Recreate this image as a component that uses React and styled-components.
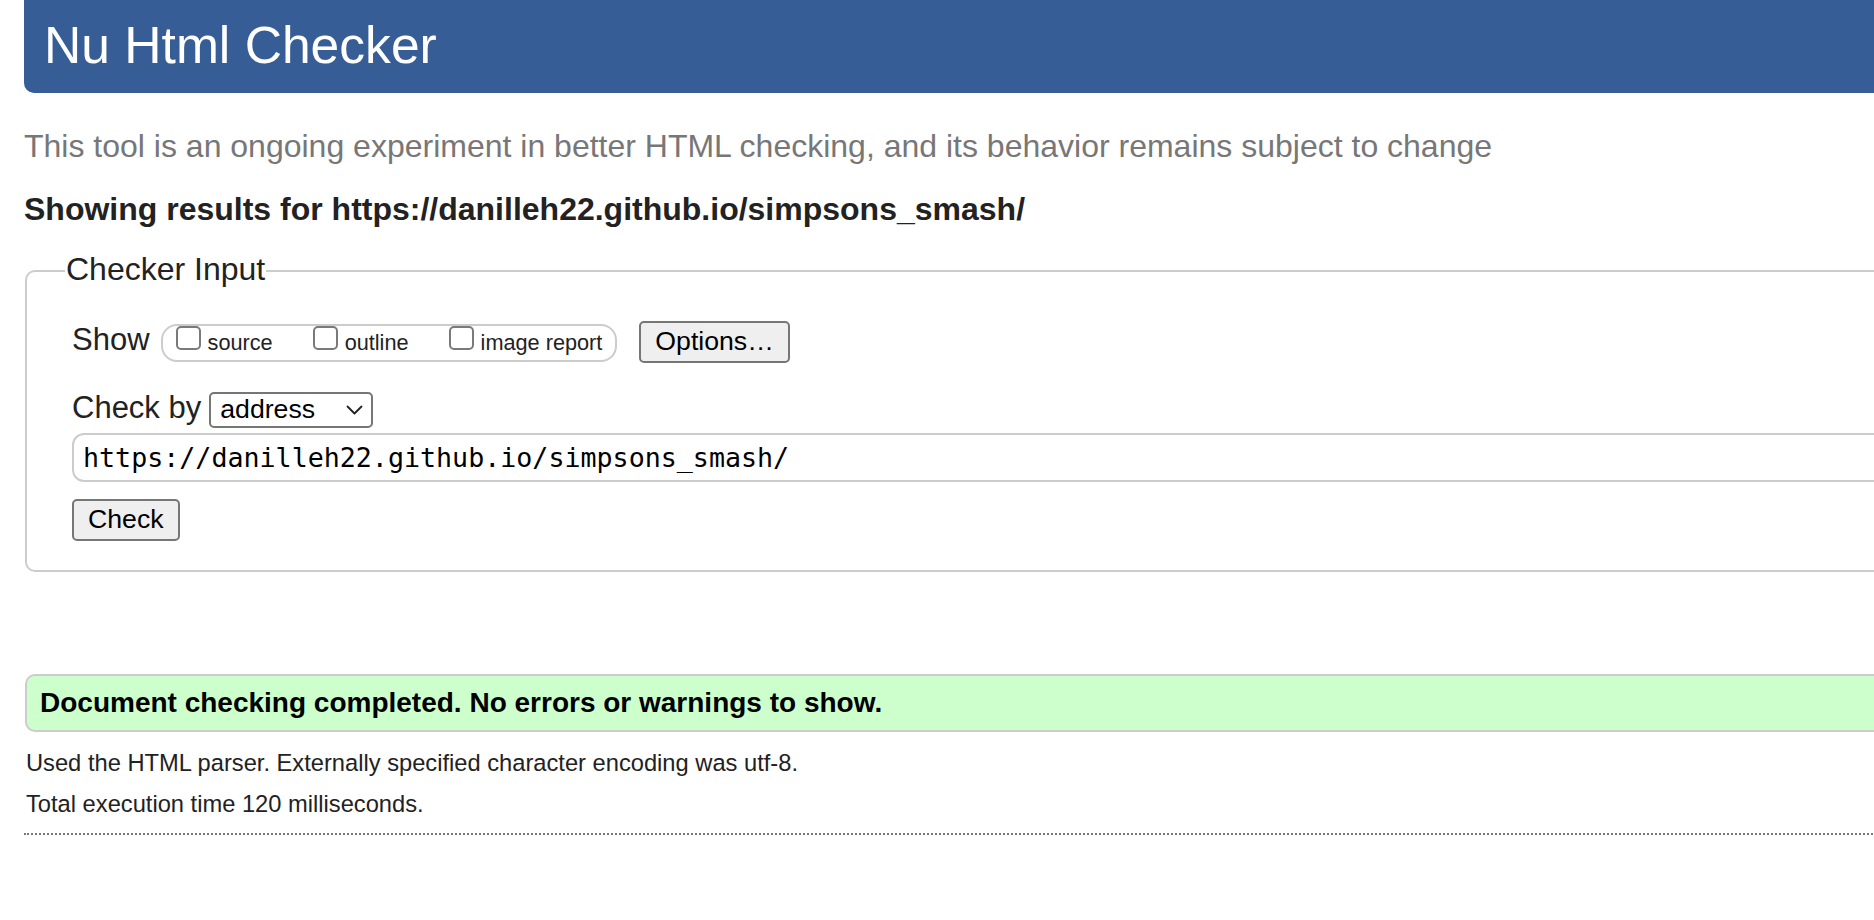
import React from "react";
import styled, { createGlobalStyle } from "styled-components";

const GlobalStyle = createGlobalStyle`
  html, body {
    margin: 0;
    padding: 0;
    overflow: hidden;
    background: #fff;
  }
  body {
    font-family: "Liberation Sans", Arial, Helvetica, sans-serif;
    color: #222;
  }
`;

const App = () => {
  return (
    <Page>
      <GlobalStyle />
      <Header>
        <Title>Nu Html Checker</Title>
      </Header>
      <Intro>
        This tool is an ongoing experiment in better HTML checking, and its
        behavior remains subject to change
      </Intro>
      <Showing>Showing results for https://danilleh22.github.io/simpsons_smash/</Showing>

      <Fieldset>
        <Legend>Checker Input</Legend>
        <ShowRow>
          <Label>Show</Label>
          <Group>
            <Option>
              <Box />
              <OptionText>source</OptionText>
            </Option>
            <Option>
              <Box />
              <OptionText>outline</OptionText>
            </Option>
            <Option>
              <Box />
              <OptionText>image report</OptionText>
            </Option>
          </Group>
          <Button $ml={22}>Options…</Button>
        </ShowRow>
        <ByRow>
          <Label>Check by</Label>
          <Select>
            <span>address</span>
            <svg width="17" height="10" viewBox="0 0 17 10">
              <path
                d="M1.5 1.5 L8.5 8.5 L15.5 1.5"
                fill="none"
                stroke="#222"
                strokeWidth="1.8"
                strokeLinecap="round"
                strokeLinejoin="round"
              />
            </svg>
          </Select>
        </ByRow>
        <UrlInput>https://danilleh22.github.io/simpsons_smash/</UrlInput>
        <Button $mt={17}>Check</Button>
      </Fieldset>

      <Success>Document checking completed. No errors or warnings to show.</Success>
      <Note $mt={17}>Used the HTML parser. Externally specified character encoding was utf-8.</Note>
      <Note $mt={12}>Total execution time 120 milliseconds.</Note>
      <Rule />
    </Page>
  );
};

export default App;

const Page = styled.div`
  width: 1940px;
  padding-left: 24px;
  box-sizing: border-box;
`;

const Header = styled.div`
  background-color: #365d95;
  border-radius: 0 0 0 10px;
  height: 93px;
  box-sizing: border-box;
  padding: 15px 20px 18px;
`;

const Title = styled.h1`
  margin: 0;
  font-size: 51.6px;
  font-weight: 400;
  line-height: 60px;
  color: #fff;
`;

const Intro = styled.p`
  margin: 34px 0 0;
  font-size: 32px;
  line-height: 38px;
  color: #777;
  white-space: nowrap;
`;

const Showing = styled.h2`
  margin: 25px 0 0;
  font-size: 32px;
  line-height: 38px;
  font-weight: 700;
  color: #222;
`;

const Fieldset = styled.fieldset`
  margin: 22px 0 0 1px;
  padding: 29px 0 29px 45px;
  border: 2px solid #ccc;
  border-radius: 10px;
  min-width: 0;
`;

const Legend = styled.legend`
  margin-left: -7px;
  padding: 0 1px 4px;
  font-size: 32px;
  line-height: 38px;
  color: #222;
`;

const ShowRow = styled.div`
  display: flex;
  align-items: baseline;
`;

const ByRow = styled.div`
  display: flex;
  align-items: baseline;
  margin-top: 26px;
`;

const Label = styled.span`
  font-size: 31px;
  line-height: 38px;
  color: #222;
`;

const Group = styled.div`
  display: flex;
  align-items: baseline;
  gap: 40px;
  margin-left: 11px;
  padding: 0 13px 4px;
  border: 2px solid #ccc;
  border-radius: 16px;
`;

const Option = styled.label`
  display: flex;
  align-items: baseline;
`;

const Box = styled.span`
  display: block;
  width: 25px;
  height: 24px;
  box-sizing: border-box;
  border: 2px solid #7a7a7a;
  border-radius: 5px;
  background: #fff;
  margin-right: 7px;
`;

const OptionText = styled.span`
  font-size: 21.7px;
  line-height: 26px;
  color: #222;
`;

const Button = styled.button`
  margin: ${(p) => p.$mt || 0}px 0 0 ${(p) => p.$ml || 0}px;
  align-self: ${(p) => (p.$ml ? "auto" : "flex-start")};
  padding: 3px 14px 4px;
  font-family: "Liberation Sans", Arial, Helvetica, sans-serif;
  font-size: 26.67px;
  line-height: 31px;
  color: #000;
  background: #efefef;
  border: 2px solid #767676;
  border-radius: 5px;
`;

const Select = styled.div`
  display: flex;
  align-items: center;
  justify-content: space-between;
  width: 164px;
  height: 36px;
  box-sizing: border-box;
  margin-left: 8px;
  padding: 0 8px 2px 9px;
  border: 2px solid #767676;
  border-radius: 5px;
  font-size: 26.67px;
  line-height: 30px;
  color: #000;

  svg {
    margin-top: 2px;
  }
`;

const UrlInput = styled.div`
  margin-top: 5px;
  height: 49px;
  box-sizing: border-box;
  padding: 0 9px;
  border: 2px solid #ccc;
  border-radius: 12px;
  font-family: "DejaVu Sans Mono", Menlo, monospace;
  font-size: 26.67px;
  line-height: 45px;
  color: #000;
`;

const Success = styled.div`
  margin: 102px 0 0 1px;
  padding: 10px 13px;
  background-color: #ccffcc;
  border: 2px solid #ccc;
  border-right: 0;
  border-radius: 10px 0 0 10px;
  font-size: 28px;
  line-height: 34px;
  font-weight: 700;
  color: #000;
`;

const Note = styled.p`
  margin: ${(p) => p.$mt}px 0 0 2px;
  font-size: 23.7px;
  line-height: 29px;
  color: #222;
`;

const Rule = styled.hr`
  margin: 14px 0 0;
  border: 0;
  border-top: 2px dotted #777;
`;
